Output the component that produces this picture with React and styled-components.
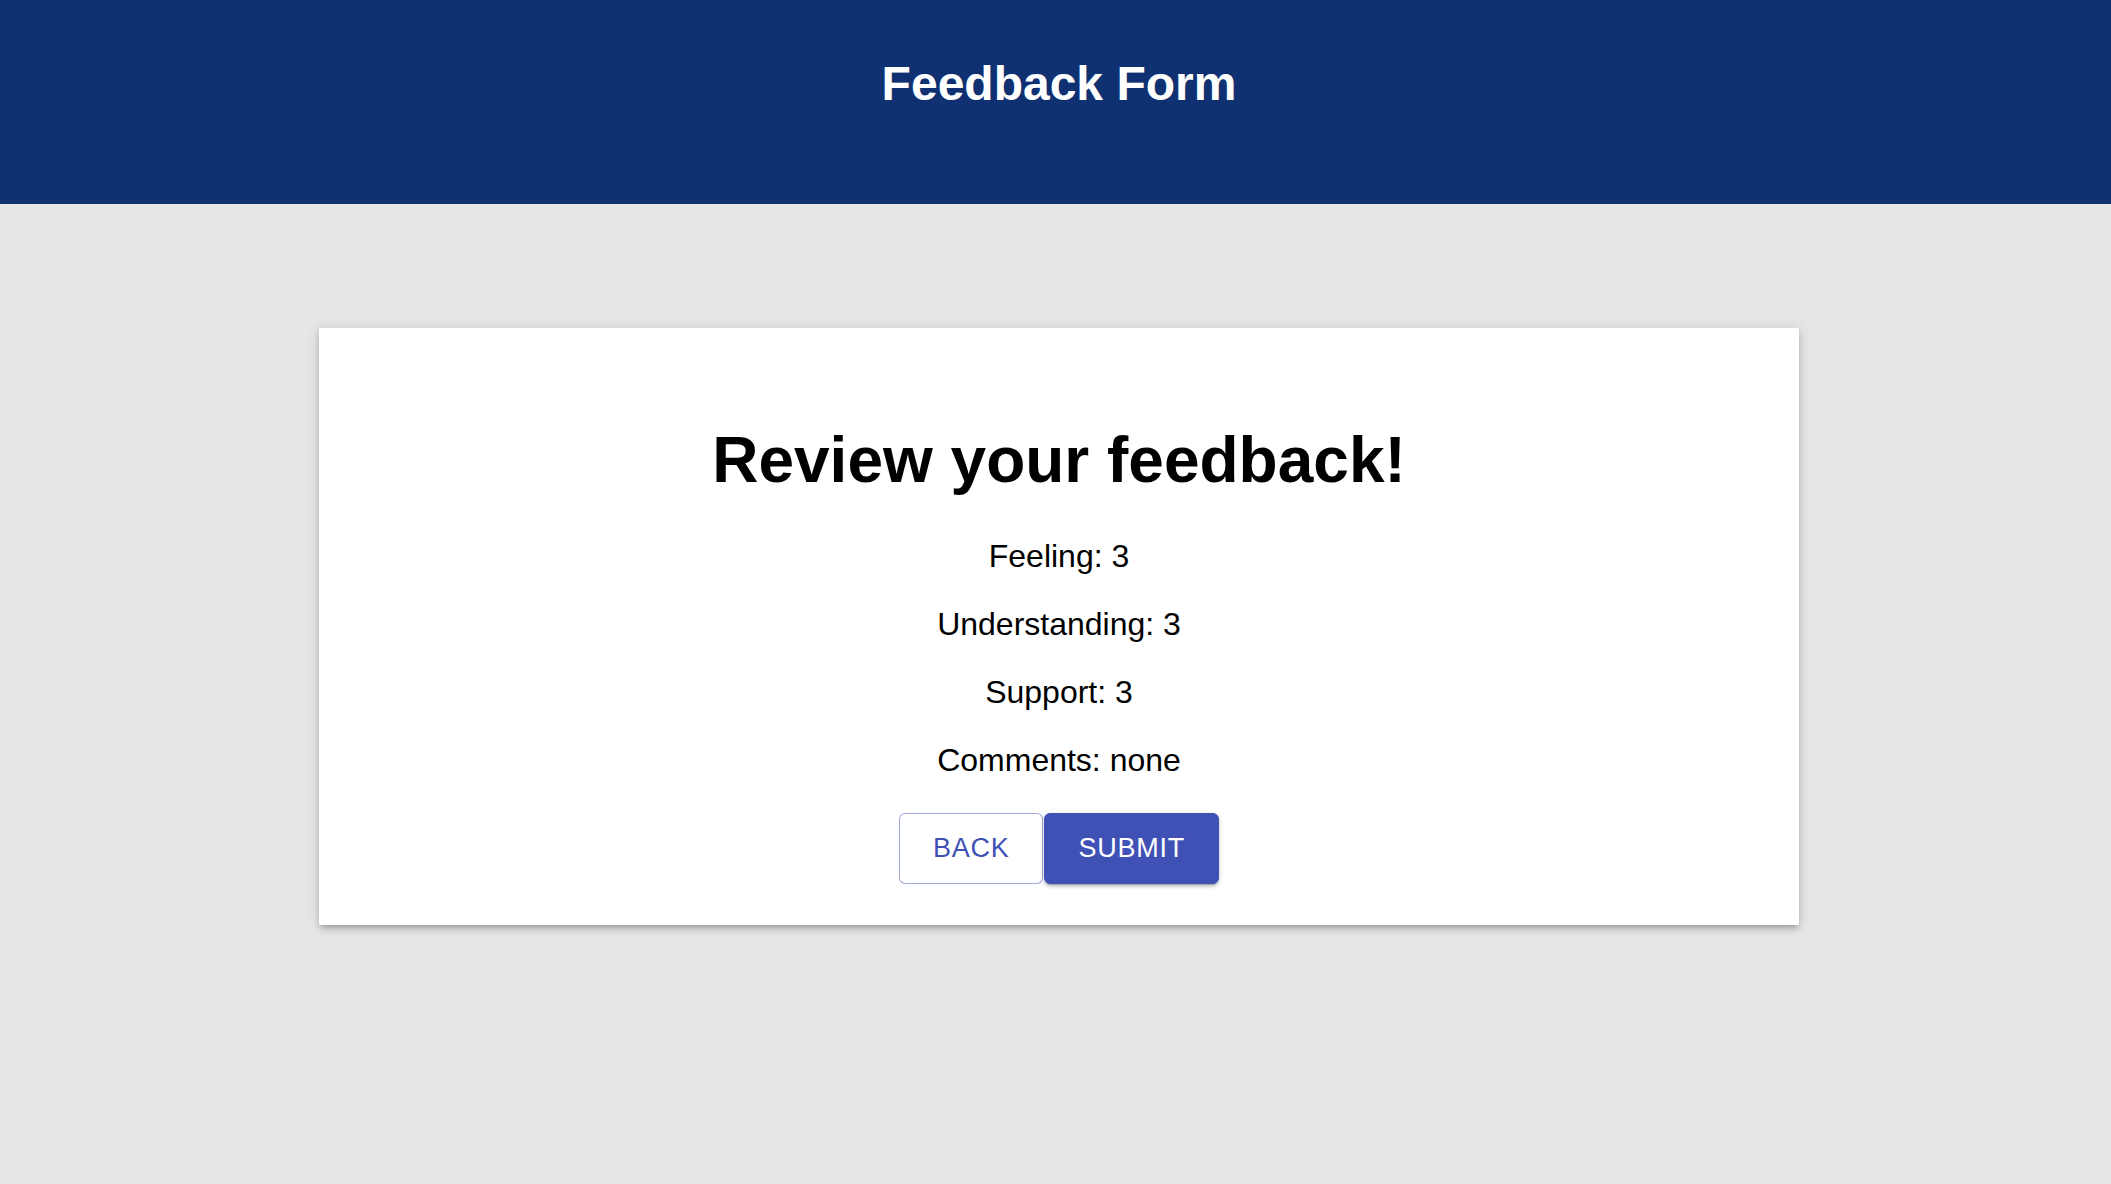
import React from 'react'
import styled, { createGlobalStyle } from 'styled-components'

const GlobalStyle = createGlobalStyle`
    html, body {
        margin: 0;
        padding: 0;
        background-color: #e6e6e6;
        font-family: "Liberation Sans", Arial, Helvetica, sans-serif;
    }
`

const feedback = [
    { label: 'Feeling', value: 3 },
    { label: 'Understanding', value: 3 },
    { label: 'Support', value: 3 },
    { label: 'Comments', value: 'none' },
]

export default function App() {
    return (
        <>
            <GlobalStyle />
            <Page>
                <Header>
                    <HeaderTitle>Feedback Form</HeaderTitle>
                </Header>
                <Main>
                    <Card>
                        <Title>Review your feedback!</Title>
                        <List>
                            {feedback.map((item) => (
                                <Line key={item.label}>{item.label}: {item.value}</Line>
                            ))}
                        </List>
                        <Actions>
                            <Button variant="outlined">Back</Button>
                            <Button variant="contained">Submit</Button>
                        </Actions>
                    </Card>
                </Main>
            </Page>
        </>
    )
}

const Page = styled.div`
    min-height: 100vh;
    background-color: #e6e6e6;
`

const Header = styled.header`
    box-sizing: border-box;
    height: 204px;
    padding: 56px 0 0 7px;
    background-color: #0f3172;
    text-align: center;
`

const HeaderTitle = styled.h1`
    margin: 0;
    color: #fff;
    font-size: 48px;
    font-weight: 700;
    line-height: 55px;
`

const Main = styled.main`
    padding: 124px 0 0 7px;
    display: flex;
    justify-content: center;
`

const Card = styled.section`
    box-sizing: border-box;
    width: 1480px;
    padding: 95px 0 41px;
    background-color: #fff;
    border-radius: 1px;
    box-shadow: 0 4px 5px -3px rgba(0, 0, 0, 0.2),
        0 4px 6px 0 rgba(0, 0, 0, 0.14),
        0 1px 14px 0 rgba(0, 0, 0, 0.12);
    display: flex;
    flex-direction: column;
    align-items: center;
    color: #000;
`

const Title = styled.h2`
    margin: 0 0 41px;
    font-size: 64px;
    font-weight: 700;
    line-height: 74px;
`

const List = styled.div`
    display: flex;
    flex-direction: column;
    align-items: center;
    gap: 31px;
    margin-bottom: 34px;
`

const Line = styled.p`
    margin: 0;
    font-size: 32px;
    line-height: 37px;
`

const Button = styled.button`
    box-sizing: border-box;
    height: 71px;
    padding: 0 33px;
    border-radius: 6px;
    font-family: "Liberation Sans", Arial, Helvetica, sans-serif;
    font-size: 27px;
    font-weight: 400;
    letter-spacing: 0.77px;
    text-transform: uppercase;
    cursor: pointer;
    border: 1px solid ${(p) => (p.variant === 'outlined' ? 'rgba(63, 81, 181, 0.5)' : '#3f51b5')};
    background-color: ${(p) => (p.variant === 'outlined' ? '#fff' : '#3f51b5')};
    color: ${(p) => (p.variant === 'outlined' ? '#3f51b5' : '#fff')};
    box-shadow: ${(p) => (p.variant === 'outlined'
        ? 'none'
        : '0 4px 1px -3px rgba(0,0,0,0.2), 0 3px 3px 0 rgba(0,0,0,0.14), 0 1px 7px 0 rgba(0,0,0,0.12)')};
`

const Actions = styled.div`
    display: flex;
    gap: 1px;
`
